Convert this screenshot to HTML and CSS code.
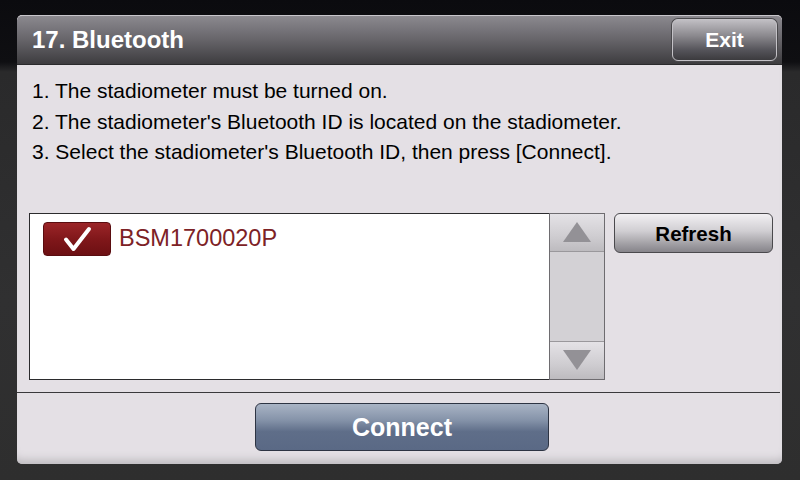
FILE: index.html
```html
<!DOCTYPE html>
<html>
<head>
<meta charset="utf-8">
<link rel="stylesheet" href="styles.css">
</head>
<body>
<div class="window">
  <div class="titlebar">
    <div class="title">17. Bluetooth</div>
    <button class="exit">Exit</button>
  </div>
  <div class="content">
    <div class="steps">
      <div>1. The stadiometer must be turned on.</div>
      <div>2. The stadiometer's Bluetooth ID is located on the stadiometer.</div>
      <div>3. Select the stadiometer's Bluetooth ID, then press [Connect].</div>
    </div>
    <div class="listrow">
      <div class="list">
        <div class="item">
          <div class="check">
            <svg width="32" height="28" viewBox="0 0 32 28"><path d="M5 14.5 L12.5 24 L28 4" fill="none" stroke="#fff" stroke-width="4" stroke-linecap="round" stroke-linejoin="round"/></svg>
          </div>
          <span class="itemname">BSM1700020P</span>
        </div>
      </div>
      <div class="scroll">
        <div class="sbtn up"><svg width="30" height="22" viewBox="0 0 30 22"><path d="M15 1 L29 21 L1 21 Z" fill="#939196"/></svg></div>
        <div class="track"></div>
        <div class="sbtn down"><svg width="30" height="22" viewBox="0 0 30 22"><path d="M1 1 L29 1 L15 21 Z" fill="#939196"/></svg></div>
      </div>
      <button class="refresh">Refresh</button>
    </div>
  </div>
  <div class="footer">
    <button class="connect">Connect</button>
  </div>
</div>
</body>
</html>
```
FILE: styles.css
```css
html, body {
  margin: 0;
  padding: 0;
}
body {
  width: 800px;
  height: 480px;
  box-sizing: border-box;
  padding: 15px 18px 0 17px;
  background: linear-gradient(180deg, #0b0b0f 0px, #0f0f12 62px, #2a2a2b 72px, #303031 300px, #2e2e2e 480px);
  font-family: "Liberation Sans", Arial, sans-serif;
  overflow: hidden;
}
.window {
  width: 765px;
  height: 449px;
  background: #e4e0e5;
  border-radius: 5px;
  display: flex;
  flex-direction: column;
  overflow: hidden;
  box-shadow: inset 0 -10px 8px -6px #bdbabe;
}
.titlebar {
  height: 50px;
  box-sizing: border-box;
  background: linear-gradient(180deg, #8b898f 0%, #6a686d 45%, #3d3c3f 100%);
  border-top: 1px solid #c8c6cb;
  border-bottom: 1px solid #2a2a2c;
  border-radius: 5px 5px 0 0;
  display: flex;
  align-items: center;
  justify-content: space-between;
  padding: 0 5px 0 15px;
}
.title {
  color: #fff;
  font-weight: bold;
  font-size: 24px;
  margin-top: -1px;
}
.exit {
  width: 105px;
  height: 42px;
  border-radius: 6px;
  border: 1px solid #c4c2c7;
  box-shadow: 0 0 0 1px #4a494c;
  background: linear-gradient(180deg, #c0bec3 0%, #8a888d 40%, #55545a 75%, #3c3b3e 100%);
  color: #fff;
  font-family: "Liberation Sans", Arial, sans-serif;
  font-weight: bold;
  font-size: 21px;
  padding: 0;
}
.content {
  flex: 1;
  padding: 11px 9px 0 12px;
}
.steps {
  padding-left: 3px;
  font-size: 21px;
  line-height: 30.5px;
  color: #000;
}
.listrow {
  display: flex;
  align-items: flex-start;
  margin-top: 45px;
}
.list {
  width: 520px;
  height: 167px;
  box-sizing: border-box;
  background: #fff;
  border: 1px solid #2b2b2d;
  border-right: none;
  padding: 8px 13px;
}
.item {
  display: flex;
  align-items: center;
  gap: 8px;
}
.check {
  width: 68px;
  height: 34px;
  box-sizing: border-box;
  border-radius: 4px;
  background: linear-gradient(180deg, #9b2528 0%, #7e1619 55%, #6c1013 100%);
  border: 1px solid #5a0d10;
  display: flex;
  align-items: center;
  justify-content: center;
}
.itemname {
  color: #7d2226;
  font-size: 23.5px;
}
.scroll {
  width: 56px;
  height: 167px;
  box-sizing: border-box;
  border: 1px solid #6e6c70;
  background: #d3d1d5;
  display: flex;
  flex-direction: column;
}
.sbtn {
  height: 37px;
  background: linear-gradient(180deg, #e4e2e6 0%, #cfcdd1 60%, #bdbbbf 100%);
  display: flex;
  align-items: center;
  justify-content: center;
}
.sbtn.up { border-bottom: 1px solid #9a989c; }
.sbtn.down { border-top: 1px solid #9a989c; }
.track { flex: 1; }
.refresh {
  margin-left: 9px;
  width: 159px;
  height: 40px;
  border-radius: 6px;
  border: 1px solid #4a494d;
  background: linear-gradient(180deg, #f2f0f3 0%, #d0ced2 45%, #a09ea3 80%, #86848a 100%);
  color: #000;
  font-family: "Liberation Sans", Arial, sans-serif;
  font-weight: bold;
  font-size: 20.5px;
  padding: 2px 0 0 0;
}
.footer {
  height: 72px;
  box-sizing: border-box;
  border-top: 1px solid #3a393c;
  margin-right: 2px;
  display: flex;
  justify-content: center;
  padding-top: 10px;
  padding-left: 7px;
}
.connect {
  width: 294px;
  height: 48px;
  border-radius: 6px;
  border: 1px solid #2d3443;
  background: linear-gradient(180deg, #a9b4c5 0%, #8593a9 35%, #5f6e89 60%, #5a6985 100%);
  color: #fff;
  font-family: "Liberation Sans", Arial, sans-serif;
  font-weight: bold;
  font-size: 25px;
  padding: 0;
}
```
